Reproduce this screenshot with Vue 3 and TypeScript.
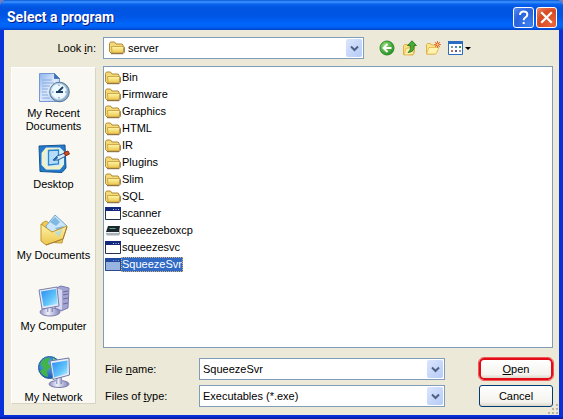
<script setup lang="ts">
import { ref } from 'vue'

type Kind = 'folder' | 'program' | 'device'
interface Entry { name: string; kind: Kind }

const entries: Entry[] = [
  { name: 'Bin', kind: 'folder' },
  { name: 'Firmware', kind: 'folder' },
  { name: 'Graphics', kind: 'folder' },
  { name: 'HTML', kind: 'folder' },
  { name: 'IR', kind: 'folder' },
  { name: 'Plugins', kind: 'folder' },
  { name: 'Slim', kind: 'folder' },
  { name: 'SQL', kind: 'folder' },
  { name: 'scanner', kind: 'program' },
  { name: 'squeezeboxcp', kind: 'device' },
  { name: 'squeezesvc', kind: 'program' },
  { name: 'SqueezeSvr', kind: 'program' },
]

const places = [
  { id: 'recent', label: 'My Recent Documents' },
  { id: 'desktop', label: 'Desktop' },
  { id: 'documents', label: 'My Documents' },
  { id: 'computer', label: 'My Computer' },
  { id: 'network', label: 'My Network' },
]

const selected = ref('SqueezeSvr')
const fileName = ref('SqueezeSvr')

function pick(entry: Entry) {
  selected.value = entry.name
  if (entry.kind !== 'folder') fileName.value = entry.name
}
</script>

<template>
  <main class="dialog">
    <svg class="defs" width="0" height="0" aria-hidden="true">
      <defs>
        <linearGradient id="gold" x1="0" y1="0" x2="0" y2="1">
          <stop offset="0" stop-color="#fff6a8" /><stop offset="1" stop-color="#ecc44c" />
        </linearGradient>
        <linearGradient id="screen" x1="0" y1="0" x2="1" y2="1">
          <stop offset="0" stop-color="#2a8cf0" /><stop offset=".6" stop-color="#62c4fa" /><stop offset="1" stop-color="#c0f0ff" />
        </linearGradient>
        <linearGradient id="metal" x1="0" y1="0" x2="1" y2="0">
          <stop offset="0" stop-color="#8c8fc4" /><stop offset=".4" stop-color="#f0f1fb" /><stop offset="1" stop-color="#7f82b6" />
        </linearGradient>
        <linearGradient id="paper" x1="0" y1="0" x2="1" y2="1">
          <stop offset="0" stop-color="#8cb4ee" /><stop offset=".5" stop-color="#dce9fb" /><stop offset="1" stop-color="#b0c8ee" />
        </linearGradient>
        <radialGradient id="green" cx=".35" cy=".3" r=".8">
          <stop offset="0" stop-color="#8edb74" /><stop offset="1" stop-color="#1d8a1c" />
        </radialGradient>
        <radialGradient id="globe" cx=".4" cy=".35" r=".7">
          <stop offset="0" stop-color="#62b8f4" /><stop offset="1" stop-color="#1450b0" />
        </radialGradient>
        <symbol id="icon-folder" viewBox="0 0 16 16">
          <path d="M.5 11.500v-8l1-1.500h4l1.500 2h6l1 1v7l-1 1h-11z" fill="#f3d977" stroke="#b08b38" />
          <path d="M2.500 6.500h12.500l-1 6.500h-11z" fill="url(#gold)" stroke="#c29a38" stroke-width=".8" />
          <path d="M2 13.700h12l1.300-1.500v-5" fill="none" stroke="#86683a" />
        </symbol>
        <symbol id="icon-program" viewBox="0 0 16 16">
          <path d="M.5 1.500h15v12H.5z" fill="#fff" stroke="#25314f" />
          <path d="M0 1h16v4H0z" fill="#14287c" />
          <path d="M8 3.500h1M10.500 3.500h1M13 3.500h1" stroke="#bfccff" />
        </symbol>
        <symbol id="icon-device" viewBox="0 0 16 16">
          <path d="M3 3h12l-1 6H1z" fill="#1d282c" />
          <path d="M4.500 5.500h6" stroke="#5ba39d" />
          <path d="M1 9h13l1-4v6l-1 1.500H2L1 11z" fill="#a8b1b5" /><path d="M1 9.500h13" stroke="#eef1f1" />
        </symbol>
        <symbol id="icon-arrow" viewBox="0 0 9 7">
          <path d="M1 1.500l3.500 3.500 3.500-3.500" fill="none" stroke="#4d6185" stroke-width="2" />
        </symbol>
      </defs>
    </svg>

    <header class="titlebar">
      <h1>Select a program</h1>
      <button class="caption help" type="button" aria-label="Help">
        <svg width="19" height="19" viewBox="0 0 19 19"><path d="M6 7q0-3.500 3.700-3.500T13.300 6.700q0 1.600-2 2.800-1.600 1-1.600 2.800M9.700 14v2" fill="none" stroke="#fff" stroke-width="2" /></svg>
      </button>
      <button class="caption close" type="button" aria-label="Close">
        <svg width="19" height="19" viewBox="0 0 19 19"><path d="M5 5l9 9M14 5l-9 9" stroke="#fff" stroke-width="2.200" stroke-linecap="square" /></svg>
      </button>
    </header>

    <form class="body" @submit.prevent>
      <div class="toolbar">
        <label class="lookin" for="look">Look <u>i</u>n:</label>
        <div class="combo">
          <svg class="lead" width="16" height="16"><use href="#icon-folder" /></svg>
          <select id="look"><option>server</option></select>
          <span class="drop"><svg width="9" height="7"><use href="#icon-arrow" /></svg></span>
        </div>
        <div class="tools">
          <button type="button" aria-label="Back">
            <svg width="16" height="16" viewBox="0 0 16 16">
              <circle cx="8" cy="8" r="7" fill="url(#green)" stroke="#2d8a2a" />
              <path d="M8.500 4l-4 4 4 4M5 8h7.500" fill="none" stroke="#fff" stroke-width="2" />
            </svg>
          </button>
          <button type="button" aria-label="Up one level">
            <svg width="16" height="16" viewBox="0 0 16 16">
              <path d="M1.500 14.500V5.500l1-1h3l1 1.500h6V12L11 15z" fill="#f8df82" stroke="#e0b04a" />
              <path d="M4 8.500l9-2-2 8-9 .5z" fill="#fff0a5" stroke="#dcae45" stroke-width=".7" />
              <path d="M6 12.500q3-1.500 2.500-7H5.500L10 .8l4.500 4.700H12q1 6.500-6 7z" fill="#44ad32" stroke="#236d20" stroke-width=".8" />
            </svg>
          </button>
          <button type="button" aria-label="Create new folder">
            <svg width="16" height="16" viewBox="0 0 16 16">
              <path d="M1.500 14V4.500l1-1h3l1 1.500h6v6L10 14z" fill="#fae58f" stroke="#e0b04a" />
              <path d="M4 7.500h10L11 14H1.500z" fill="#fff3ae" stroke="#e2b54c" stroke-width=".8" />
              <path d="M12.500 1v7M9 4.500h7M10 2l5 5M15 2l-5 5" stroke="#e57836" stroke-width="1" /><circle cx="12.500" cy="4.500" r="1.600" fill="#ffdb72" stroke="#d65323" />
            </svg>
          </button>
          <button type="button" aria-label="View menu">
            <svg width="23" height="16" viewBox="0 0 23 16">
              <path d="M.5 1.500h14v13H.5z" fill="#fff" stroke="#2a6cc0" /><path d="M0 1h15v3H0z" fill="#2a6cc0" />
              <path d="M3 6h2v2H3zM11 10h2v2h-2z" fill="#8995a8" /><path d="M7 6h2v2H7z" fill="#5386cf" /><path d="M11 6h2v2h-2z" fill="#3c9551" />
              <path d="M3 10h2v2H3z" fill="#d26743" /><path d="M7 10h2v2H7z" fill="#50628d" />
              <path d="M17 7h6l-3 3z" fill="#000" />
            </svg>
          </button>
        </div>
      </div>

      <div class="columns">
        <nav class="places" aria-label="Places">
          <button v-for="p in places" :key="p.id" type="button" class="place">
            <svg v-if="p.id === 'recent'" width="32" height="32" viewBox="0 0 32 32">
              <path d="M1.500 1.500h15l5 5v23h-20z" fill="url(#paper)" stroke="#7699d6" />
              <path d="M16.500 1.500v5h5z" fill="#3e71bd" stroke="#5279b9" />
              <path d="M4 8h10M4 11h12M4 14h8M4 17h6M4 20h5M4 23h6M4 26h8" stroke="#87aae0" />
              <circle cx="21.500" cy="20" r="9.800" fill="#8fabc6" stroke="#587998" /><circle cx="20.800" cy="19.500" r="8" fill="#edf8ff" stroke="#b6d2e5" />
              <path d="M20.500 19.500l4.500-4.500M18 20h7" stroke="#1b4264" stroke-width="1.800" />
              <path d="M21 12.500v1.500M21 25v1.500M14 20h1.500M27 20h1.500" stroke="#5c86a7" />
            </svg>
            <svg v-else-if="p.id === 'desktop'" width="32" height="32" viewBox="0 0 32 32">
              <path d="M1 3l26-1 1 23-4 4.500L2 28.500z" fill="#2579c8" stroke="#155694" />
              <path d="M8 4.500h14l4 4v13l-4 5H8l-4.500-4.500V10z" fill="#d9f1f4" />
              <path d="M20 6.500H9L5.500 10v11l3.500 4h12l3-3" fill="none" stroke="#f6f0c0" stroke-width="2.500" />
              <path d="M10.500 7.500l10-.5v14l-10 1z" fill="#b5dcfa" stroke="#2d86cc" stroke-width="1.300" />
              <path d="M15 17l4-4 8-3 1 3-8 4z" fill="#d4e8fb" stroke="#235b97" /><path d="M15.500 17.500l4-3.500" stroke="#2b6ab0" stroke-width="2" />
              <path d="M26 9.500l4-1.500 1.500 3-4 2z" fill="#cc4a25" stroke="#873019" />
            </svg>
            <svg v-else-if="p.id === 'documents'" width="32" height="32" viewBox="0 0 32 32">
              <path d="M4 9l4-2 5 3 15 1-4 18-19-1z" fill="#f0cb52" stroke="#c79a3c" />
              <path d="M8 12L17 1l12 11-8 13-9-1z" fill="#cbe6fa" stroke="#76a7cd" /><path d="M12 8l5-5 5 5-4 4zM17 14l4 4 5-6" fill="#66aada" opacity=".75" />
              <path d="M3 10l11 8 15-6-4 13-17 6-5-4z" fill="url(#gold)" stroke="#c29430" />
              <path d="M16 17l4 1 5-4-4 9z" fill="#a9d9ef" opacity=".8" />
              <path d="M8 31l17-6 4-12" fill="none" stroke="#a28240" />
            </svg>
            <svg v-else-if="p.id === 'computer'" width="32" height="32" viewBox="0 0 32 32">
              <path d="M18 3l5-2 8 2-1 20-7 3-6-3z" fill="#a4a4d1" stroke="#7c7cb0" /><path d="M18 3l6 2v20l-6-2z" fill="#d7d7f0" /><path d="M25 7l5-1M25 10l5-1M25 14l5-1M25 19l5-1" stroke="#6868a1" />
              <ellipse cx="12" cy="27" rx="10" ry="4" fill="url(#metal)" stroke="#7b7caf" /><path d="M9 20h6v7H9z" fill="url(#metal)" />
              <path d="M1 5l18-3 2 19-17 3z" fill="#e5e9fa" stroke="#7780ac" /><path d="M3 6.500l15-2.500 1.500 15L5.500 21.500z" fill="url(#screen)" />
            </svg>
            <svg v-else width="32" height="32" viewBox="0 0 32 32">
              <circle cx="11.500" cy="11.500" r="11" fill="url(#globe)" stroke="#22609b" />
              <path d="M3 6q5-5 9-4l-2 5 3 4-4 4 1 6q-6-1-8-6l4-3-3-2z" fill="#42b348" /><path d="M15 2l5 3v4h-5z" fill="#7bd05e" />
              <ellipse cx="21" cy="28" rx="10" ry="3.500" fill="url(#metal)" stroke="#7778a7" /><path d="M18 21h6v7h-6z" fill="url(#metal)" />
              <path d="M12 5l19-3 .5 17-16.500 4.500z" fill="#e8edfa" stroke="#6f7aa5" /><path d="M14 7l15.500-2.500v13L16 21.500z" fill="url(#screen)" />
            </svg>
            <span>{{ p.label }}</span>
          </button>
        </nav>

        <div class="main">
          <ul class="files" aria-label="Files">
            <li v-for="e in entries" :key="e.name">
              <button type="button" class="file" :class="{ active: e.name === selected }" @click="pick(e)">
                <svg width="16" height="16"><use :href="'#icon-' + e.kind" /></svg>
                <span>{{ e.name }}</span>
              </button>
            </li>
          </ul>

          <div class="fields">
            <label for="name">File <u>n</u>ame:</label>
            <div class="combo">
              <input id="name" v-model="fileName" type="text">
              <button type="button" class="drop" aria-label="Recent names"><svg width="9" height="7"><use href="#icon-arrow" /></svg></button>
            </div>
            <button type="submit" class="push open"><u>O</u>pen</button>
            <label for="type">Files of <u>t</u>ype:</label>
            <div class="combo">
              <select id="type"><option>Executables (*.exe)</option></select>
              <span class="drop"><svg width="9" height="7"><use href="#icon-arrow" /></svg></span>
            </div>
            <button type="button" class="push">Cancel</button>
          </div>
        </div>
      </div>
      <svg class="grip" width="12" height="12" viewBox="0 0 12 12" aria-hidden="true">
        <path d="M9 1h2v2H9zM5 5h2v2H5zM9 5h2v2H9zM1 9h2v2H1zM5 9h2v2H5zM9 9h2v2H9z" fill="#b8b4a2" />
      </svg>
    </form>
  </main>
</template>

<style>
body { background: #6f7fc0; }
</style>

<style scoped>
.dialog {
  box-sizing: border-box;
  min-height: 100vh;
  display: flex;
  flex-direction: column;
  padding: 0 4px 4px;
  background: linear-gradient(#0831d9 0, #0831d9 calc(100% - 3px), #0019a0 100%);
  border-radius: 7px 7px 0 0;
  overflow: hidden;
  font: 11px/13px "Liberation Sans", Arial, sans-serif;
  color: #000;
}
.defs { position: absolute; }
button, input, select { font: inherit; color: inherit; margin: 0; padding: 0; border: 0; background: none; }
svg { display: block; flex: none; }

.titlebar {
  box-sizing: border-box;
  height: 30px;
  margin: 0 -4px;
  padding: 4px 6px 0 7px;
  display: flex;
  align-items: center;
  gap: 2px;
  background: linear-gradient(#0a58d8 0, #3d95ff 2px, #0a63ee 4px, #0054e0 8px, #0055e5 16px, #0066fc 24px, #0062f5 27px, #0043c8 30px);
}
h1 {
  flex: 1;
  margin: 0;
  font: bold 14px/18px Roboto, "Open Sans", sans-serif;
  color: #fff;
  text-shadow: 1px 1px #0a1883;
}
.caption {
  box-sizing: border-box;
  width: 21px;
  height: 21px;
  border: 1px solid #fff;
  border-radius: 3px;
}
.help { background: radial-gradient(circle at 80% 85%, #3c7ff0, #2a62dc 60%, #5b8df0); }
.close { background: radial-gradient(circle at 80% 85%, #e8653c, #d84a22 60%, #ea8b6c); }

.body {
  flex: 1;
  display: flex;
  flex-direction: column;
  position: relative;
  padding: 7px 6px 8px 7px;
  background: #ece9d8;
}
.toolbar {
  display: flex;
  align-items: center;
  margin-bottom: 7px;
}
.lookin {
  width: 85px;
  margin-right: 7px;
  text-align: right;
}
.combo {
  box-sizing: border-box;
  flex: 1;
  min-width: 0;
  height: 22px;
  display: flex;
  align-items: center;
  position: relative;
  padding: 1px;
  border: 1px solid #7f9db9;
  background: #fff;
}
.lead { margin: 0 1px 0 4px; }
.combo select, .combo input {
  appearance: none;
  flex: 1;
  min-width: 0;
  height: 18px;
  padding: 0 20px 0 2px;
  outline: 0;
}
.combo .drop {
  position: absolute;
  top: 1px;
  right: 1px;
  width: 16px;
  height: 18px;
  display: grid;
  place-items: center;
  border-radius: 2px;
  background: linear-gradient(135deg, #dbe5fd, #b6cbf7);
  pointer-events: none;
}
.tools {
  width: 189px;
  box-sizing: border-box;
  padding-left: 15px;
  display: flex;
  gap: 7px;
}
.columns {
  flex: 1;
  display: grid;
  grid-template-columns: 85px 1fr;
  gap: 7px;
}
.places {
  box-sizing: border-box;
  height: 0;
  min-height: calc(100% - 4px);
  margin-top: 1px;
  padding-top: 4px;
  overflow: hidden;
  background: #f9f8f3;
  border: 1px solid #fff;
  border-right-color: #d8d4c4;
  border-bottom-color: #d8d4c4;
}
.place {
  width: 100%;
  height: 71px;
  display: flex;
  flex-direction: column;
  align-items: center;
  gap: 3px;
}
.place span { width: 74px; }
.main {
  display: flex;
  flex-direction: column;
  min-width: 0;
}
.files {
  flex: 1;
  margin: 0;
  padding: 2px 1px;
  list-style: none;
  background: #fff;
  border: 1px solid #7f9db9;
}
.file {
  height: 17px;
  display: flex;
  align-items: center;
}
.file span {
  border: 1px solid transparent;
}
.file.active span {
  background: #316ac5;
  border: 1px dotted #d9b27a;
  color: #fff;
}
.file.active svg { background: linear-gradient(#316ac5, #316ac5) 0 1px / 16px 13px no-repeat; }
.file.active use { opacity: .5; }
.fields {
  display: grid;
  grid-template-columns: 96px 1fr 74px;
  gap: 5px 0;
  align-items: center;
  margin-top: 10px;
}
.fields label { padding-left: 2px; }
.fields .combo { margin-right: 34px; }
.push {
  box-sizing: border-box;
  height: 22px;
  border: 1px solid #003c74;
  border-radius: 3px;
  background: linear-gradient(#fff, #f4f3ee 80%, #dcd7cb);
}
.open {
  border: 2px solid #e30b18;
  border-radius: 5px;
  outline: 1px solid #ed5a57;
}
.grip {
  position: absolute;
  right: 0;
  bottom: 0;
}
</style>
